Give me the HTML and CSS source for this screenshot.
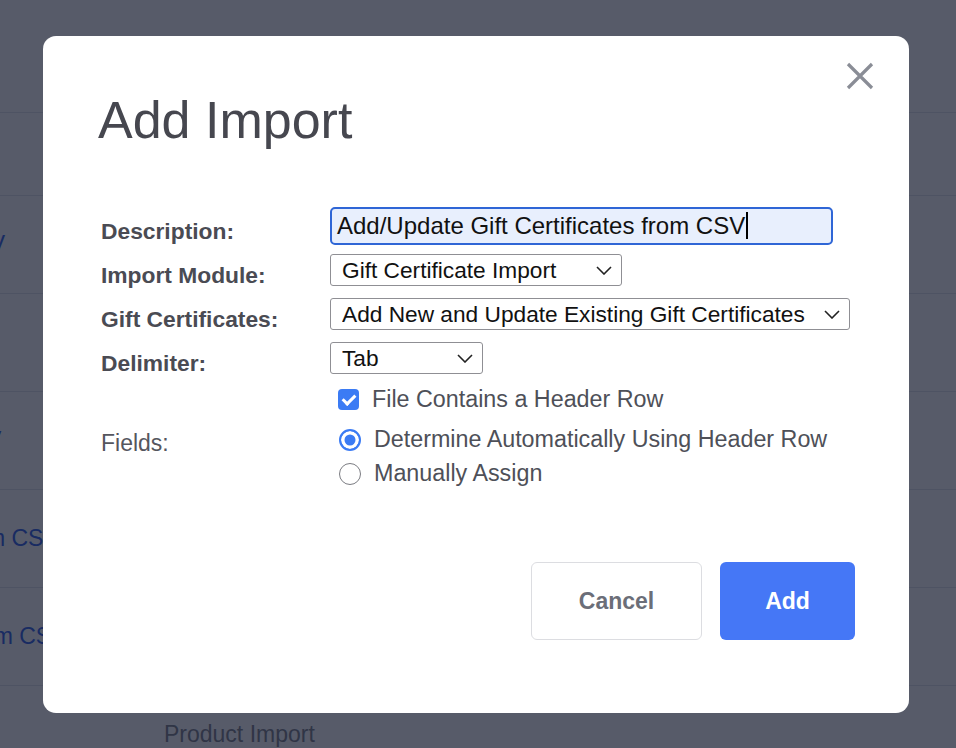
FILE: index.html
```html
<!DOCTYPE html>
<html lang="en">
<head>
    <meta charset="UTF-8">
    <meta name="viewport" content="width=device-width, initial-scale=1.0">
    <title>Imports</title>
    <link rel="stylesheet" href="styles.css">
</head>
<body>
    <div class="page">
        <div class="page-head"></div>
        <div class="toolbar-row"></div>
        <div class="imports">
            <div class="import-row"><a class="import-desc" href="#">Add/Update Customers from CSV</a><span class="import-module">Customer Import</span></div>
            <div class="import-row"><a class="import-desc" href="#">Bulk Edit Products</a><span class="import-module">Product Import</span></div>
            <div class="import-row"><a class="import-desc" href="#">Add/Update Addresses from CSV</a><span class="import-module">Address Import</span></div>
            <div class="import-row"><a class="import-desc" href="#">Add/Update Gift Certificates From CSV</a><span class="import-module">Gift Certificate Import</span></div>
            <div class="import-row"><a class="import-desc" href="#">Add/Update Product Options From CSV</a><span class="import-module">Option Import</span></div>
            <div class="import-row"><a class="import-desc" href="#">Import Products</a><span class="import-module">Product Import</span></div>
        </div>
    </div>

    <div class="backdrop">
        <div class="dialog" role="dialog" aria-labelledby="dialogTitle">
            <button type="button" class="dialog-close" aria-label="Close">
                <svg width="28" height="28" viewBox="0 0 28 28"><path d="M2 2L26 26M26 2L2 26" stroke="#8a8d96" stroke-width="3.2" fill="none"/></svg>
            </button>
            <h1 class="dialog-title" id="dialogTitle">Add Import</h1>

            <form class="import-form" id="importForm">
                <label class="form-label" for="description">Description:</label>
                <div class="text-field" id="description">Add/Update Gift Certificates from CSV<span class="caret"></span></div>

                <label class="form-label" for="module">Import Module:</label>
                <div class="select-wrap">
                    <select id="module" class="select select-module">
                        <option>Gift Certificate Import</option>
                    </select>
                    <svg class="chevron" width="16" height="9" viewBox="0 0 16 9"><path d="M1 1L8 8L15 1" stroke="#222" stroke-width="1.6" fill="none"/></svg>
                </div>

                <label class="form-label" for="mode">Gift Certificates:</label>
                <div class="select-wrap">
                    <select id="mode" class="select select-mode">
                        <option>Add New and Update Existing Gift Certificates</option>
                    </select>
                    <svg class="chevron" width="16" height="9" viewBox="0 0 16 9"><path d="M1 1L8 8L15 1" stroke="#222" stroke-width="1.6" fill="none"/></svg>
                </div>

                <label class="form-label" for="delimiter">Delimiter:</label>
                <div class="select-wrap">
                    <select id="delimiter" class="select select-delimiter">
                        <option>Tab</option>
                    </select>
                    <svg class="chevron" width="16" height="9" viewBox="0 0 16 9"><path d="M1 1L8 8L15 1" stroke="#222" stroke-width="1.6" fill="none"/></svg>
                </div>

                <span></span>
                <label class="check">
                    <input type="checkbox" checked>
                    File Contains a Header Row
                </label>

                <span class="form-label plain">Fields:</span>
                <div class="radio-group">
                    <label class="radio"><input type="radio" name="fields" checked> Determine Automatically Using Header Row</label>
                    <label class="radio"><input type="radio" name="fields"> Manually Assign</label>
                </div>
            </form>

            <div class="dialog-actions">
                <button type="button" class="btn btn-cancel">Cancel</button>
                <button type="submit" form="importForm" class="btn btn-add">Add</button>
            </div>
        </div>
    </div>
</body>
</html>
```

FILE: styles.css
```css
body {
    margin: 0;
    font-family: "Liberation Sans", Arial, sans-serif;
    background-color: #fff;
    overflow: hidden;
}

/* page behind the dialog */
.page-head {
    height: 112px;
    border-bottom: 1px solid #e2e4ea;
}
.toolbar-row {
    height: 82px;
    border-bottom: 1px solid #e2e4ea;
}
.imports {
    margin-left: -340px;
}
.import-row {
    display: grid;
    grid-template-columns: 504px 1fr;
    align-items: center;
    height: 97px;
    border-bottom: 1px solid #e2e4ea;
    font-size: 23px;
}
.import-desc {
    color: #2f5fe6;
    text-decoration: none;
    white-space: nowrap;
}
.import-module {
    color: #7c7f8a;
    white-space: nowrap;
}

/* dialog */
.backdrop {
    position: fixed;
    inset: 0;
    display: flex;
    align-items: center;
    justify-content: center;
    padding-right: 4px;
    background-color: rgba(15, 21, 41, 0.7);
}
.dialog {
    position: relative;
    width: 866px;
    box-sizing: border-box;
    padding: 54px 54px 73px 55px;
    background-color: #fff;
    border-radius: 13px;
}
.dialog-close {
    position: absolute;
    top: 26px;
    right: 35px;
    width: 28px;
    height: 28px;
    padding: 0;
    border: none;
    background: none;
    cursor: pointer;
}
.dialog-close svg {
    display: block;
}
.dialog-title {
    margin: 0 0 57px;
    font-size: 52px;
    line-height: 60px;
    font-weight: 400;
    color: #46474f;
}

.import-form {
    display: grid;
    grid-template-columns: 229px auto;
    grid-template-rows: 38px 38px 38px 38px 34px auto;
    row-gap: 6px;
    align-items: center;
    margin-left: 3px;
}
.form-label {
    padding-top: 11px;
    font-size: 22.8px;
    line-height: 26px;
    font-weight: 700;
    color: #4a4b53;
}
.form-label.plain {
    align-self: start;
    padding-top: 4px;
    font-size: 23px;
    font-weight: 400;
    line-height: 33px;
    color: #55565e;
}

.text-field {
    width: 503px;
    height: 38px;
    box-sizing: border-box;
    padding: 0 5px;
    border: 2px solid #2f66d6;
    border-radius: 5px;
    background-color: #e8effd;
    font-size: 24px;
    line-height: 34px;
    color: #111;
    white-space: nowrap;
}
.caret {
    display: inline-block;
    width: 1.5px;
    height: 27px;
    margin-left: 1px;
    vertical-align: -5px;
    background-color: #000;
}

.select-wrap {
    position: relative;
    display: inline-block;
    justify-self: start;
}
.select {
    appearance: none;
    height: 32px;
    padding: 0 34px 0 11px;
    border: 1px solid #8f8f94;
    border-radius: 3px;
    background-color: #fff;
    font-family: inherit;
    font-size: 22.7px;
    color: #111;
    display: block;
}
.select-module { width: 292px; }
.select-mode { width: 520px; }
.select-delimiter { width: 153px; }
.chevron {
    position: absolute;
    right: 10px;
    top: 12px;
    pointer-events: none;
}

.check,
.radio {
    display: flex;
    align-items: center;
    gap: 13px;
    font-size: 23.3px;
    color: #4e5058;
}
.check {
    padding-left: 8px;
}
.check input {
    appearance: none;
    position: relative;
    width: 21px;
    height: 21px;
    margin: 0;
    border-radius: 4px;
    background-color: #3b7bf4;
}
.check input::after {
    content: "";
    position: absolute;
    left: 7px;
    top: 3px;
    width: 5px;
    height: 10px;
    border: solid #fff;
    border-width: 0 3px 3px 0;
    transform: rotate(45deg);
}
.radio-group {
    padding-left: 9px;
}
.radio {
    height: 34px;
}
.radio input {
    appearance: none;
    width: 22px;
    height: 22px;
    margin: 0;
    box-sizing: border-box;
    border: 1.5px solid #7b7c82;
    border-radius: 50%;
    background-color: #fff;
}
.radio input:checked {
    border: 2px solid #3b7bf4;
    background-color: #3b7bf4;
    box-shadow: inset 0 0 0 3.5px #fff;
}

.dialog-actions {
    display: flex;
    justify-content: flex-end;
    gap: 18px;
    margin-top: 71px;
}
.btn {
    height: 78px;
    padding-top: 3px;
    border-radius: 6px;
    font-family: inherit;
    font-size: 23px;
    font-weight: 700;
    cursor: pointer;
}
.btn-cancel {
    width: 171px;
    border: 1px solid #dcdde1;
    background-color: #fff;
    color: #6b6e78;
}
.btn-add {
    width: 135px;
    border: none;
    background-color: #4577f6;
    color: #fff;
}
```
